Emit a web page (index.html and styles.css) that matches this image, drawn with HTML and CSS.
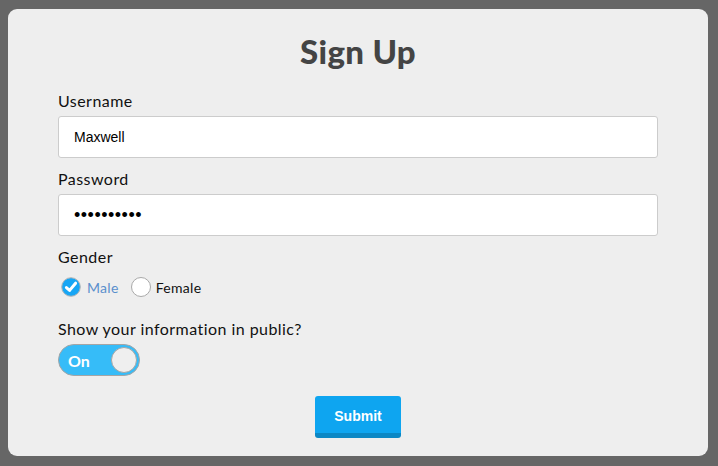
FILE: index.html
```html
<!DOCTYPE html>
<html>
<head>
<meta charset="utf-8">
<link rel="stylesheet" href="styles.css">
</head>
<body>
<div class="card">
  <h1 class="title">Sign Up</h1>
  <div class="field">
    <label class="label">Username</label>
    <div class="input">Maxwell</div>
  </div>
  <div class="field">
    <label class="label">Password</label>
    <div class="input pw">••••••••••</div>
  </div>
  <div class="field">
    <label class="label">Gender</label>
    <div class="radios">
      <span class="radio checked"><svg width="20" height="20" viewBox="0 0 20 20"><circle cx="10" cy="10" r="9.3" fill="#17a6f5" stroke="#b5b5b5" stroke-width="1"/><path d="M5.4 10.6 L8.6 13.4 L14.6 6.2" fill="none" stroke="#fff" stroke-width="3" stroke-linecap="round" stroke-linejoin="round"/></svg><span class="rtext male">Male</span></span>
      <span class="radio"><span class="circle"></span><span class="rtext">Female</span></span>
    </div>
  </div>
  <div class="field public">
    <label class="label">Show your information in public?</label>
    <div class="toggle"><span class="ttext">On</span><span class="knob"></span></div>
  </div>
  <div class="actions">
    <button class="submit">Submit</button>
  </div>
</div>
</body>
</html>
```
FILE: styles.css
```css
html, body { margin: 0; padding: 0; }
body {
  background: #666666;
  padding: 9px 10px 10px 8px;
  font-family: "Lato", "Open Sans", sans-serif;
}
.card {
  width: 700px;
  height: 447px;
  box-sizing: border-box;
  background: #eeeeee;
  border-radius: 9px;
  padding: 26px 50px 0 50px;
}
.title {
  margin: 0 0 24px 0;
  text-align: center;
  font-family: "Lato", sans-serif;
  font-weight: 900;
  font-size: 33px;
  line-height: 32px;
  color: #444444;
  letter-spacing: 0.3px;
}
.field { display: flex; flex-direction: column; }
.label {
  font-size: 16px;
  line-height: 20px;
  color: #111;
  margin-bottom: 5px;
  letter-spacing: 0.45px;
}
.input {
  height: 42px;
  box-sizing: border-box;
  background: #fff;
  border: 1px solid #cccccc;
  border-radius: 3px;
  padding: 0 15px;
  display: flex;
  align-items: center;
  font-family: "Liberation Sans", Arial, sans-serif;
  font-size: 14px;
  color: #000;
  margin-bottom: 11px;
}
.input.pw { font-size: 18px; letter-spacing: 0.5px; padding-top: 1px; }
.radios {
  display: flex;
  align-items: center;
  gap: 12px;
  margin-left: 3px;
  height: 22px;
  margin-top: 4px;
}
.radio { display: flex; align-items: center; gap: 6px; }
.radio svg { display: block; }
.circle {
  width: 20px; height: 20px; box-sizing: border-box;
  border: 1px solid #a9a9a9; border-radius: 50%; background: #fff;
}
.rtext { font-size: 14px; color: #111; letter-spacing: 0.3px; }
.rtext.male { color: #5a8fcc; }
.radio + .radio { gap: 5px; }
.public { margin-top: 21px; }
.public .label { margin-bottom: 5px; }
.toggle {
  width: 82px; height: 32px; box-sizing: border-box;
  background: #36bcf8;
  border: 1px solid #a5a5a5;
  border-radius: 16px;
  display: flex; align-items: center; justify-content: space-between;
  padding: 0 2px 0 9px;
}
.ttext {
  color: #fff; font-weight: 700; font-size: 16px;
}
.knob {
  width: 26px; height: 26px; box-sizing: border-box;
  background: #efefef; border: 1px solid #a5a5a5; border-radius: 50%;
}
.actions { display: flex; justify-content: center; margin-top: 20px; }
.submit {
  width: 86px; height: 42px;
  background: #0ea5f0;
  border: none;
  border-bottom: 5px solid #0b87c4;
  border-radius: 3px;
  color: #fff;
  font-family: "Liberation Sans", Arial, sans-serif;
  font-weight: 700;
  font-size: 14px;
  padding: 0;
  padding-top: 3px;
}
```
